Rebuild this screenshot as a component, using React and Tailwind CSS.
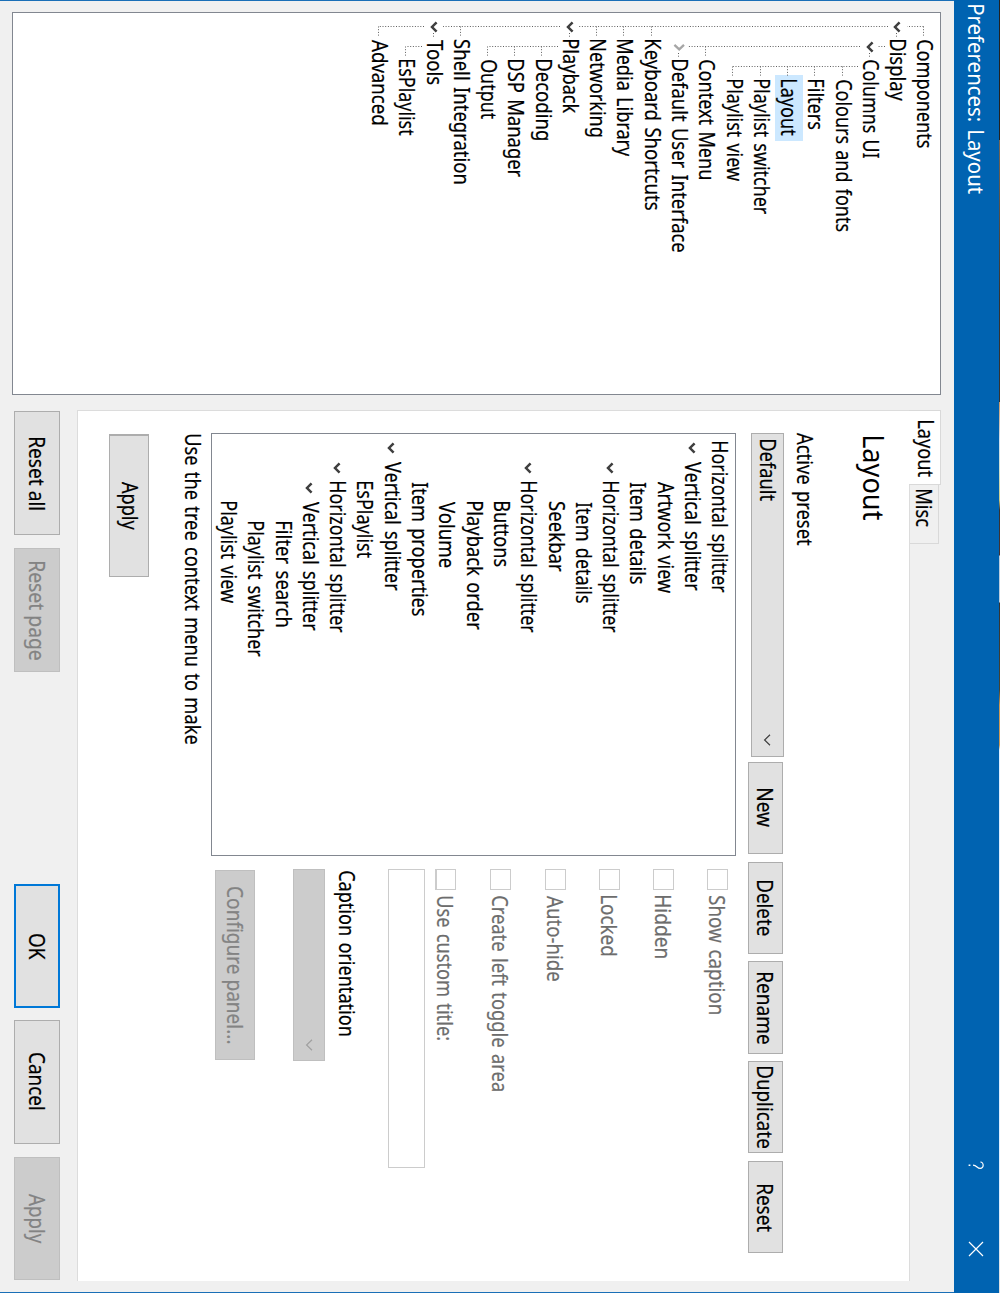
import { useLayoutEffect, useRef, useState } from "react";
import clsx from "clsx";

// One line of text whose inked width is exactly `w` pixels, starting at the box's left edge.
function T({ w, children, className }) {
  const ref = useRef(null);
  const [fit, setFit] = useState({ scale: 1, shift: 0 });
  useLayoutEffect(() => {
    const ctx = document.createElement("canvas").getContext("2d");
    const cs = getComputedStyle(ref.current);
    ctx.font = `${cs.fontWeight} ${cs.fontSize} ${cs.fontFamily}`;
    ctx.wordSpacing = cs.wordSpacing;
    const m = ctx.measureText(children);
    const ink = m.actualBoundingBoxRight + m.actualBoundingBoxLeft;
    const scale = w / ink;
    setFit({ scale, shift: m.actualBoundingBoxLeft * scale });
  }, [w, children]);
  return (
    <span className={clsx("block h-5 shrink-0 whitespace-nowrap leading-[20px]", className)} style={{ width: w }}>
      <span
        ref={ref}
        className="inline-block origin-left"
        style={{ transform: `translateX(${fit.shift}px) scaleX(${fit.scale})` }}
      >
        {children}
      </span>
    </span>
  );
}

function Chevron({ open = true, className }) {
  return (
    <svg width="14" height="14" viewBox="0 0 14 14" fill="none" className={clsx("shrink-0", className)}>
      {open ? (
        <path d="M2.3 4.4 L7 9 L11.7 4.4" stroke="#404040" strokeWidth="2.5" />
      ) : (
        <path d="M4.8 2 L9.3 6.8 L4.8 11.6" stroke="#a6a6a6" strokeWidth="2.3" />
      )}
    </svg>
  );
}

function ThinChevron({ className }) {
  return (
    <svg width="12" height="8" viewBox="0 0 12 8" fill="none" className={className}>
      <path d="M0.8 1 L6 6.4 L11.2 1" stroke="currentColor" strokeWidth="1.2" />
    </svg>
  );
}

// [level, label, ink width, state]
const pages = [
  [0, "Components", 108.5],
  [0, "Display", 61, "open"],
  [1, "Columns UI", 98.5, "open"],
  [2, "Colours and fonts", 152],
  [2, "Filters", 50],
  [2, "Layout", 56, "selected"],
  [2, "Playlist switcher", 134.5],
  [2, "Playlist view", 101.5],
  [1, "Context Menu", 119.5],
  [1, "Default User Interface", 192, "closed"],
  [0, "Keyboard Shortcuts", 170.5],
  [0, "Media Library", 116.5],
  [0, "Networking", 97],
  [0, "Playback", 74, "open"],
  [1, "Decoding", 80.5],
  [1, "DSP Manager", 117.5],
  [1, "Output", 59.5],
  [0, "Shell Integration", 144],
  [0, "Tools", 45, "open"],
  [1, "EsPlaylist", 76],
  [0, "Advanced", 85],
];

// [level, label, ink width, open]
const panels = [
  [0, "Horizontal splitter", 151],
  [1, "Vertical splitter", 129, true],
  [2, "Artwork view", 111.5],
  [2, "Item details", 102.5],
  [2, "Horizontal splitter", 151, true],
  [3, "Item details", 101.5],
  [3, "Seekbar", 70],
  [2, "Horizontal splitter", 151, true],
  [3, "Buttons", 65],
  [3, "Playback order", 128],
  [3, "Volume", 65.5],
  [2, "Item properties", 134.5],
  [1, "Vertical splitter", 129, true],
  [2, "EsPlaylist", 76.5],
  [2, "Horizontal splitter", 151, true],
  [3, "Vertical splitter", 129, true],
  [4, "Filter search", 105],
  [4, "Playlist switcher", 135],
  [3, "Playlist view", 101.5],
];

const pageIndent = ["pl-[7px]", "pl-[27px]", "pl-[47px]"];
const panelIndent = ["pl-0", "pl-[7px]", "pl-[27px]", "pl-[47px]", "pl-[67px]"];

function Connectors() {
  return (
    <svg
      width="120"
      height="600"
      viewBox="0 0 120 600"
      className="pointer-events-none absolute left-0 top-0"
      fill="none"
      stroke="#606060"
      strokeWidth="1"
      strokeDasharray="1 1.7"
    >
      <path d="M13.5 16.5 V33 M13.5 52 V361 M13.5 380 V497 M13.5 516 V562" />
      <path d="M13.5 16.5 H24 M13.5 288.5 H24 M13.5 316.5 H24 M13.5 343.5 H24 M13.5 479.5 H24 M13.5 561.5 H24" />
      <path d="M20 43.5 H24 M20 370.5 H24 M20 506.5 H24" />
      <path d="M33.5 55 V62 M33.5 80 V252 M33.5 234.5 H44 M40 70.5 H44 M40 261.5 H44" />
      <path d="M33.5 382 V452 M33.5 398.5 H44 M33.5 425.5 H44 M33.5 452.5 H44" />
      <path d="M33.5 518 V534 M33.5 534.5 H44" />
      <path d="M53.5 82 V207 M53.5 97.5 H64 M53.5 125.5 H64 M53.5 152.5 H64 M53.5 179.5 H64 M53.5 207.5 H64" />
    </svg>
  );
}

function Button({ className, w, children, off }) {
  return (
    <button
      className={clsx(
        "flex shrink-0 items-center justify-center border",
        off ? "border-[#bfbfbf] bg-[#cccccc] text-[#838383]" : "bg-[#e1e1e1]",
        className
      )}
    >
      <T w={w} className="ml-px">{children}</T>
    </button>
  );
}

function Check({ w, children, row = "h-[54px]", className }) {
  return (
    <label className={clsx("flex items-start", row)}>
      <span className="flex h-[21px] items-center">
        <span className={clsx("h-[21px] w-[21px] border border-[#cccccc] bg-white", className)} />
        <T w={w} className="ml-[5.5px]">{children}</T>
      </span>
    </label>
  );
}

export default function App() {
  return (
    <div className="h-[1293px] w-[1000px] overflow-hidden">
      <div className="flex h-[1000px] w-[1293px] origin-top-left translate-x-[1000px] rotate-90 flex-col bg-[#f0f0f0] font-['Noto_Sans',sans-serif] text-[21px] text-black [word-spacing:1.8px] [-webkit-text-stroke:0.2px]">
        <div className="h-px shrink-0 bg-[linear-gradient(90deg,#222_0,#222_140px,#765_140px,#333_300px,#333_402px,#c96_402px,#cde_440px,#cdc_470px,#cc8_500px,#333_510px,#433_555px,#bcd_556px,#bcd_602px,#333_603px,#443_690px,#c95_705px,#c95_745px,#def_750px,#def_1200px,#ddd_1293px)]" />
        <header className="flex h-[45px] shrink-0 items-start border-x border-[#0063b1] bg-[#0063b1] text-white [-webkit-text-stroke:0px]">
          <T w={189} className="ml-[4px] mt-[13px] text-[22.5px]">Preferences: Layout</T>
          <svg width="9" height="16" viewBox="0 0 9 16" fill="none" stroke="white" strokeWidth="1.2" className="ml-[967px] mt-[15px]">
            <path d="M1 3.6 C1 0 7.4 -0.2 7.4 3.8 C7.4 7 4.2 7 4.2 11" />
            <path d="M4.2 13.6 V15.4" strokeWidth="1.6" />
          </svg>
          <svg width="16" height="16" viewBox="0 0 16 16" fill="none" stroke="white" strokeWidth="1.2" className="ml-[71px] mt-[15px]">
            <path d="M1 1 L15 15 M15 1 L1 15" />
          </svg>
        </header>
        <main className="flex h-[954px] items-start border-x border-[#1a6fb7]">
          <nav className="relative ml-[11px] mt-[13px] h-[929px] w-[383px] shrink-0 border border-[#828790] bg-white pt-px">
            <Connectors />
            {pages.map(([level, label, w, state], i) => (
              <div key={i} className={clsx("flex h-[27.28px] items-center", pageIndent[level])}>
                <span className="flex w-[14px] shrink-0">
                  {(state === "open" || state === "closed") && (
                    <Chevron open={state === "open"} className="mt-[2px]" />
                  )}
                </span>
                <span
                  className={clsx(
                    "ml-px flex items-center pl-[5px]",
                    state === "selected" && "h-[28px] w-[66px] bg-[#cce8ff]"
                  )}
                >
                  <T w={w}>{label}</T>
                </span>
              </div>
            ))}
          </nav>

          <div className="ml-[15px] mt-[13px] flex w-[871px] flex-col">
            <div className="flex h-8 items-start">
              <div className="relative z-10 h-8 w-[75px] border border-b-0 border-[#d9d9d9] bg-white pl-[9.5px] pt-[4px]">
                <T w={56.5}>Layout</T>
              </div>
              <div className="-ml-px mt-[2px] h-[30px] w-[60px] border border-[#d9d9d9] bg-[#f0f0f0] pl-[5px] pt-[4px]">
                <T w={37}>Misc</T>
              </div>
            </div>

            <section className="-mt-px h-[833px] border border-r-0 border-[#dcdcdc] bg-white pl-[22px]">
              <div className="h-[94px] pl-[3px] pt-[25px]">
                <T w={84} className="text-[29px] [-webkit-text-stroke:0px]">Layout</T>
              </div>
              <div className="h-[31px]">
                <T w={113}>Active preset</T>
              </div>
              <div className="flex h-12 items-start">
                <div className="flex h-[33px] w-[324px] items-center justify-between border border-[#adadad] bg-[#e1e1e1] pl-[6px] pr-[10px]">
                  <T w={61.5} className="-mt-px">Default</T>
                  <ThinChevron className="text-[#404040]" />
                </div>
                <Button w={38.5} className="ml-[5px] mt-px h-[35px] w-[92px] border-[#adadad]">New</Button>
                <Button w={54.5} className="ml-2 mt-px h-[35px] w-[92px] border-[#adadad]">Delete</Button>
                <Button w={71} className="ml-[7px] mt-px h-[35px] w-[93px] border-[#adadad]">Rename</Button>
                <Button w={81} className="ml-[7px] mt-px h-[35px] w-[92px] border-[#adadad]">Duplicate</Button>
                <Button w={47.5} className="ml-2 mt-px h-[35px] w-[92px] border-[#adadad] pl-[2px]">Reset</Button>
              </div>

              <div className="flex h-[525px] items-start">
                <div className="h-[525px] w-[423px] shrink-0 border border-[#828790] bg-white pt-px">
                  {panels.map(([level, label, w, open], i) => (
                    <div key={i} className={clsx("flex h-[27.3px] items-center", panelIndent[level])}>
                      {level > 0 && (
                        <span className="flex w-[14px] shrink-0">{open && <Chevron className="mt-[3px]" />}</span>
                      )}
                      <T w={w} className={level > 0 ? "ml-[6.5px]" : "ml-[8px]"}>{label}</T>
                    </div>
                  ))}
                </div>
                <div className="ml-[13px] pt-2">
                  <div className="text-[#6d6d6d]">
                    <Check w={118.5}>Show caption</Check>
                    <Check w={62.5}>Hidden</Check>
                    <Check w={60}>Locked</Check>
                    <Check w={85} row="h-[55px]">Auto-hide</Check>
                    <Check w={195.5} row="h-[55px]">Create left toggle area</Check>
                    <Check w={144.5} row="h-[31px]" className="border-b-2">Use custom title:</Check>
                  </div>
                  <div className="h-[37px] w-[299px] border border-[#cccccc] bg-white" />
                  <T w={165} className="ml-[2px] mt-[31px]">Caption orientation</T>
                  <div className="mt-[12px] flex h-[32px] w-[192px] items-center justify-end border border-[#bfbfbf] bg-[#cccccc] pr-[9px]">
                    <ThinChevron className="text-[#a0a0a0]" />
                  </div>
                  <Button off w={157} className="ml-px mt-[38px] h-10 w-[190px] pb-px">Configure panel...</Button>
                </div>
              </div>

              <T w={310} className="ml-px mt-2">Use the tree context menu to make</T>
              <Button w={48} className="ml-px mt-[34px] h-10 w-[143px] border-l-2 border-[#adadad] pb-[2px] pr-[2px]">Apply</Button>
            </section>

            <footer className="mt-[17px] flex">
              <Button w={72} className="ml-px h-[46px] w-[124px] border-[#adadad]">Reset all</Button>
              <Button off w={98} className="ml-[13px] h-[46px] w-[124px]">Reset page</Button>
              <Button w={25.5} className="ml-[212px] h-[46px] w-[124px] border-2 border-[#0078d7]">OK</Button>
              <Button w={56.5} className="ml-3 h-[46px] w-[124px] border-[#adadad] pr-[3px]">Cancel</Button>
              <Button off w={49.5} className="ml-[13px] h-[46px] w-[123px]">Apply</Button>
            </footer>
          </div>
        </main>
      </div>
    </div>
  );
}
